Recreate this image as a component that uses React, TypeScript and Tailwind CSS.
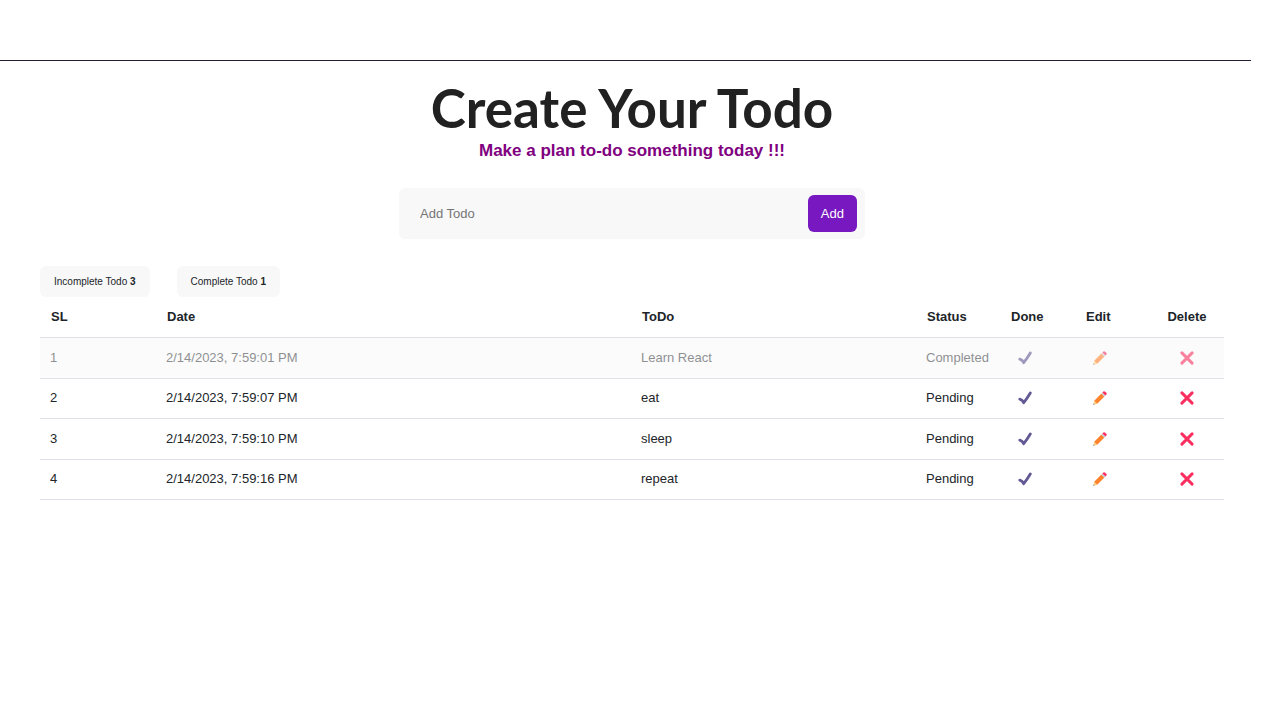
import { useState } from "react";

type Todo = { id: number; date: string; text: string; done: boolean };

const initialTodos: Todo[] = [
  { id: 1, date: "2/14/2023, 7:59:01 PM", text: "Learn React", done: true },
  { id: 2, date: "2/14/2023, 7:59:07 PM", text: "eat", done: false },
  { id: 3, date: "2/14/2023, 7:59:10 PM", text: "sleep", done: false },
  { id: 4, date: "2/14/2023, 7:59:16 PM", text: "repeat", done: false },
];

function CheckIcon() {
  return (
    <svg viewBox="0 0 14 14" className="size-[14px]" aria-hidden="true">
      <path d="M1.8 8.2C3.6 8.7 4.8 9.7 5.7 11.7C8 8.8 9.8 6 12.3 1.9" fill="none" stroke="#635994" strokeWidth="2.8" strokeLinecap="round" strokeLinejoin="round" />
    </svg>
  );
}

function PencilIcon() {
  return (
    <svg viewBox="0 0 14 14" className="size-[14px]" aria-hidden="true">
      <path d="M0.3 13.7L1.3 9.7L4.3 12.7Z" fill="#ffce7c" />
      <path d="M0.3 13.7L0.6 12.5L1.5 13.4Z" fill="#4a4a5a" />
      <path d="M1.2 9.8L8.4 2.6L11.4 5.6L4.2 12.8Z" fill="#ff822d" />
      <path d="M8.3 2.7L9.4 1.6L12.4 4.6L11.3 5.7Z" fill="#c9ccd6" />
      <path d="M9.4 1.6L10.4 0.6Q11.2 -0.1 12.2 0.7L13.3 1.8Q14.1 2.8 13.4 3.6L12.4 4.6Z" fill="#f92f60" />
    </svg>
  );
}

function CrossIcon() {
  return (
    <svg viewBox="0 0 14 14" className="size-[14px]" aria-hidden="true">
      <path d="M1.9 1.9L12.1 12.1M12.1 1.9L1.9 12.1" fill="none" stroke="#f92f60" strokeWidth="2.9" strokeLinecap="round" />
    </svg>
  );
}

export default function App() {
  const [todos, setTodos] = useState(initialTodos);
  const [draft, setDraft] = useState("");

  const completed = todos.filter((todo) => todo.done).length;

  const addTodo = () => {
    const text = draft.trim();
    if (!text) return;
    setTodos([...todos, { id: Date.now(), date: new Date().toLocaleString(), text, done: false }]);
    setDraft("");
  };

  const editTodo = (todo: Todo) => {
    const text = window.prompt("Edit todo", todo.text);
    if (text) setTodos(todos.map((item) => (item.id === todo.id ? { ...item, text } : item)));
  };

  return (
    <div className="min-h-screen bg-white pr-4 font-['Liberation_Sans',Arial,sans-serif] text-[13px] text-[#212529]">
      <header className="mr-[13px] h-[61px] border-b border-[#212135]" />

      <main className="px-10">
        <div className="pt-4 text-center">
          <h1 className="font-['Lato',sans-serif] text-[53px] leading-[62px] font-bold text-[#212121]">Create Your Todo</h1>
          <p className="text-[17px] leading-6 font-bold text-[purple]">Make a plan to-do something today !!!</p>
        </div>

        <form
          className="mx-auto mt-[25px] flex h-[51px] w-full max-w-[466px] items-center rounded-md bg-[#f8f8f8] pr-2 pl-[21px]"
          onSubmit={(event) => {
            event.preventDefault();
            addTodo();
          }}
        >
          <input
            aria-label="Add Todo"
            placeholder="Add Todo"
            value={draft}
            onChange={(event) => setDraft(event.target.value)}
            className="min-w-0 flex-1 bg-transparent outline-none placeholder:text-[#757575]"
          />
          <button type="submit" className="h-[37px] rounded-md bg-[#7818c0] px-[13px] text-white">
            Add
          </button>
        </form>

        <div className="mt-[27px] flex gap-[27px] text-[10px]">
          <button type="button" className="h-[31px] rounded-md bg-[#f8f8f8] px-[14px]">
            Incomplete Todo <b>{todos.length - completed}</b>
          </button>
          <button type="button" className="h-[31px] rounded-md bg-[#f8f8f8] px-[14px]">
            Complete Todo <b>{completed}</b>
          </button>
        </div>

        <table className="w-full table-fixed border-collapse text-left">
          <colgroup>
            <col className="w-[116px]" />
            <col />
            <col className="w-[285px]" />
            <col className="w-[84px]" />
            <col className="w-[75px]" />
            <col className="w-[75px]" />
            <col className="w-[74px]" />
          </colgroup>
          <thead>
            <tr className="h-10 border-b border-[#dee2e6]">
              <th className="px-[11px]">SL</th>
              <th className="px-[11px]">Date</th>
              <th className="px-[11px]">ToDo</th>
              <th className="px-[11px]">Status</th>
              <th className="px-[11px]">Done</th>
              <th className="px-[11px]">Edit</th>
              <th className="text-center">Delete</th>
            </tr>
          </thead>
          <tbody>
            {todos.map((todo, index) => (
              <tr
                key={todo.id}
                className={`h-10 border-b border-[#dee2e6] odd:h-[41px] ${todo.done ? "bg-[#fbfbfb]" : ""}`}
              >
                <td className="px-[10px]"><span className={todo.done ? "opacity-50" : ""}>{index + 1}</span></td>
                <td className="px-[10px]"><span className={todo.done ? "opacity-50" : ""}>{todo.date}</span></td>
                <td className="px-[10px]"><span className={todo.done ? "opacity-50" : ""}>{todo.text}</span></td>
                <td className="px-[10px]"><span className={todo.done ? "opacity-50" : ""}>{todo.done ? "Completed" : "Pending"}</span></td>
                <td className="px-[18px]">
                  <button
                    type="button"
                    aria-label="Done"
                    className={`block ${todo.done ? "opacity-60" : ""}`}
                    onClick={() => setTodos(todos.map((item) => (item.id === todo.id ? { ...item, done: true } : item)))}
                  >
                    <CheckIcon />
                  </button>
                </td>
                <td className="px-[18px]">
                  <button type="button" aria-label="Edit" className={`block ${todo.done ? "opacity-60" : ""}`} onClick={() => editTodo(todo)}>
                    <PencilIcon />
                  </button>
                </td>
                <td>
                  <button
                    type="button"
                    aria-label="Delete"
                    className={`mx-auto block ${todo.done ? "opacity-60" : ""}`}
                    onClick={() => setTodos(todos.filter((item) => item.id !== todo.id))}
                  >
                    <CrossIcon />
                  </button>
                </td>
              </tr>
            ))}
          </tbody>
        </table>
      </main>
    </div>
  );
}
